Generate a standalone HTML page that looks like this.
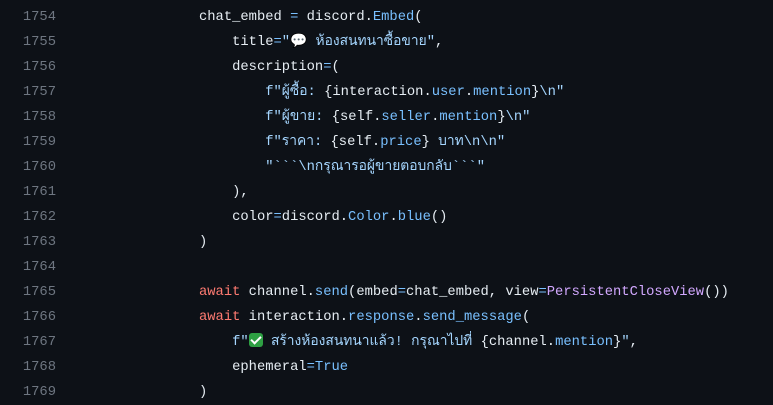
<!DOCTYPE html>
<html><head><meta charset="utf-8"><style>
html,body{margin:0;padding:0;background:#0d1117;width:773px;height:404px;overflow:hidden}
.l{position:absolute;left:0;height:25px;line-height:25px;font-family:"Liberation Mono","Noto Sans CJK SC",monospace;font-size:13.8px;color:#e6edf3;white-space:pre}
.n{position:absolute;left:0;width:56px;text-align:right;color:#6e7681}
.c{position:absolute;left:199px}
.b{color:#79c0ff}.s{color:#a5d6ff}.k{color:#ff7b72}.p{color:#d2a8ff}
.ok{display:inline-block;width:14px;height:14px;background:#2ea043;border-radius:3px;vertical-align:-2px;position:relative}
.ok:after{content:"";position:absolute;left:4px;top:1px;width:4px;height:8px;border:solid #fff;border-width:0 2px 2px 0;transform:rotate(45deg)}
</style></head><body>
<div class="l" style="top:5px"><span class="n">1754</span><span class="c">chat_embed <span class="b">=</span> discord.<span class="b">Embed</span>(</span></div>
<div class="l" style="top:30px"><span class="n">1755</span><span class="c">    title<span class="b">=</span><span class="s">"💬 ห้องสนทนาซื้อขาย"</span>,</span></div>
<div class="l" style="top:55px"><span class="n">1756</span><span class="c">    description<span class="b">=</span>(</span></div>
<div class="l" style="top:80px"><span class="n">1757</span><span class="c">        <span class="s">f"ผู้ซื้อ: </span>{interaction.<span class="b">user</span>.<span class="b">mention</span>}<span class="s">\n"</span></span></div>
<div class="l" style="top:105px"><span class="n">1758</span><span class="c">        <span class="s">f"ผู้ขาย: </span>{self.<span class="b">seller</span>.<span class="b">mention</span>}<span class="s">\n"</span></span></div>
<div class="l" style="top:130px"><span class="n">1759</span><span class="c">        <span class="s">f"ราคา: </span>{self.<span class="b">price</span>}<span class="s"> บาท\n\n"</span></span></div>
<div class="l" style="top:155px"><span class="n">1760</span><span class="c">        <span class="s">"&#96;&#96;&#96;\nกรุณารอผู้ขายตอบกลับ&#96;&#96;&#96;"</span></span></div>
<div class="l" style="top:180px"><span class="n">1761</span><span class="c">    ),</span></div>
<div class="l" style="top:205px"><span class="n">1762</span><span class="c">    color<span class="b">=</span>discord.<span class="b">Color</span>.<span class="b">blue</span>()</span></div>
<div class="l" style="top:230px"><span class="n">1763</span><span class="c">)</span></div>
<div class="l" style="top:255px"><span class="n">1764</span></div>
<div class="l" style="top:280px"><span class="n">1765</span><span class="c"><span class="k">await</span> channel.<span class="b">send</span>(embed<span class="b">=</span>chat_embed, view<span class="b">=</span><span class="p">PersistentCloseView</span>())</span></div>
<div class="l" style="top:305px"><span class="n">1766</span><span class="c"><span class="k">await</span> interaction.<span class="b">response</span>.<span class="b">send_message</span>(</span></div>
<div class="l" style="top:330px"><span class="n">1767</span><span class="c">    <span class="s">f"<span class="ok"></span> สร้างห้องสนทนาแล้ว! กรุณาไปที่ </span>{channel.<span class="b">mention</span>}<span class="s">"</span>,</span></div>
<div class="l" style="top:355px"><span class="n">1768</span><span class="c">    ephemeral<span class="b">=</span><span class="b">True</span></span></div>
<div class="l" style="top:380px"><span class="n">1769</span><span class="c">)</span></div>
</body></html>
